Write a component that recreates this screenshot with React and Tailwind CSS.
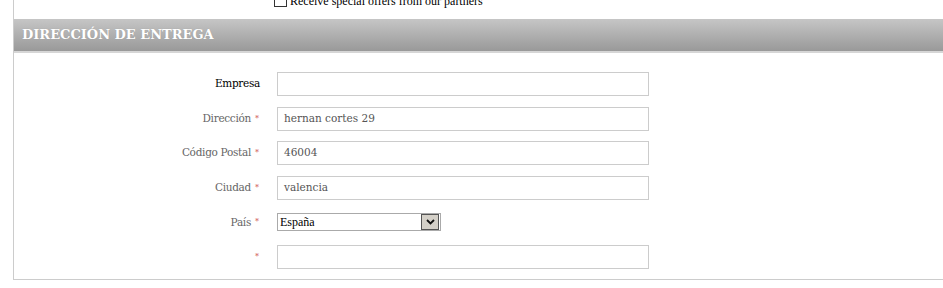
const serif = { fontFamily: '"DejaVu Serif", "Liberation Serif", serif' };

const fields = [
  { label: 'Empresa', required: false, value: '', dark: true },
  { label: 'Dirección', required: true, value: 'hernan cortes 29' },
  { label: 'Código Postal', required: true, value: '46004' },
  { label: 'Ciudad', required: true, value: 'valencia' },
  { label: 'País', required: true, select: 'España' },
  { label: '', required: true, value: '' },
];

function Label({ label, required, dark }) {
  return (
    <div className="w-[246px] shrink-0 flex justify-end items-center">
      <span className={`text-[10.5px] tracking-[-0.3px] ${dark ? 'text-black' : 'text-[#666]'}`}>{label}</span>
      {required && <span className="ml-[4px] mr-[1px] text-[8px] leading-none text-[#c44]">*</span>}
    </div>
  );
}

function Row({ field }) {
  return (
    <div className="flex items-center h-[24px]">
      <Label {...field} />
      <div className="ml-[17px]">
        {field.select ? (
          <div className="flex items-center w-[164px] h-[18px] border border-[#aaa] bg-white">
            <span className="flex-1 pl-[2px] text-[12px] text-black" style={{ fontFamily: '"Liberation Serif", serif' }}>
              {field.select}
            </span>
            <span className="w-[18px] h-[16px] mr-[1px] flex items-center justify-center bg-[#d4d0c8] border border-[#555]">
              <svg width="9" height="6" viewBox="0 0 9 6">
                <path d="M1 1 L4.5 4.5 L8 1" fill="none" stroke="#111" strokeWidth="1.8" />
              </svg>
            </span>
          </div>
        ) : (
          <div className="w-[372px] h-[24px] border border-[#ccc] bg-white flex items-center pl-[6px] text-[10.5px] text-[#555]">
            {field.value}
          </div>
        )}
      </div>
    </div>
  );
}

export default function App() {
  return (
    <div className="w-[943px] h-[288px] overflow-hidden bg-white" style={serif}>
      <div className="ml-[13px] border-l border-b border-[#ccc] pb-[10px]">
        <div className="h-[19px] flex items-start pl-[260px]" style={{ fontFamily: '"Liberation Serif", serif' }}>
          <div className="flex items-start -mt-[6px]">
            <span className="w-[13px] h-[13px] border border-[#333] bg-white" />
            <span className="ml-[3px] text-[12px] leading-[13px] text-black pt-[1px]">Receive special offers from our partners</span>
          </div>
        </div>
        <div className="h-[32px] bg-gradient-to-b from-[#c6c6c6] to-[#999] border-b-2 border-[#d6d6d6] box-content flex items-center pl-[8px]">
          <h2 className="text-[13px] font-bold text-white" style={{ textShadow: '0 0 1px rgba(0,0,0,0.15)' }}>
            DIRECCIÓN DE ENTREGA
          </h2>
        </div>
        <div className="pt-[19px] flex flex-col gap-[10.6px]">
          {fields.map((f, i) => (
            <Row key={i} field={f} />
          ))}
        </div>
      </div>
    </div>
  );
}
